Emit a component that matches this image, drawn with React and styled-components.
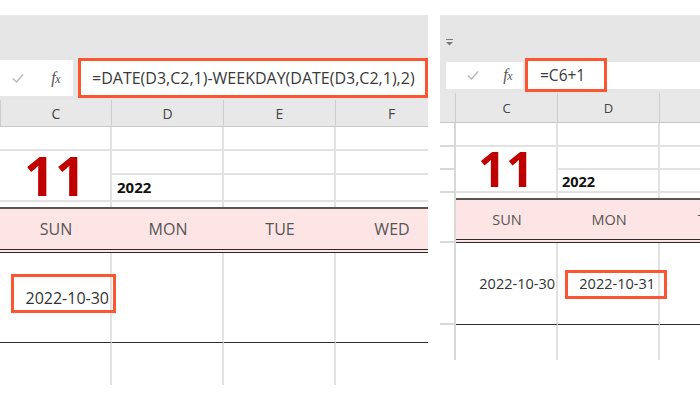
import React from 'react';
import styled, { createGlobalStyle } from 'styled-components';

const Global = createGlobalStyle`
  html, body { margin: 0; padding: 0; background: #fff; }
  body { font-family: "Open Sans", "Noto Sans", sans-serif; }
  * { box-sizing: border-box; }
`;

const RED = '#fb5531';
const GRID = '#e2e2e2';

const Page = styled.div`
  display: flex;
  gap: 12px;
  width: 700px;
  height: 400px;
  overflow: hidden;
  background: #fff;
`;

const Panel = styled.div`
  flex: none;
  width: ${p => p.$w}px;
  padding-top: 15px;
  display: flex;
  flex-direction: column;
  overflow: hidden;
`;

const Toolbar = styled.div`
  height: ${p => p.$h}px;
  background: #e6e6e6;
  display: flex;
  flex-direction: column;
  padding-bottom: ${p => p.$pb}px;
`;

const QatRow = styled.div`
  height: 26px;
  padding: 14px 0 0 6px;
  color: #7a7a7a;
`;

const FormulaRow = styled.div`
  margin-top: auto;
  height: ${p => p.$h}px;
  display: flex;
  align-items: center;
  padding-left: ${p => p.$pl}px;
`;

const FxBox = styled.div`
  flex: none;
  width: ${p => p.$w}px;
  height: ${p => p.$h}px;
  background: #fff;
  display: flex;
  align-items: center;
  justify-content: flex-end;
  gap: ${p => p.$gap}px;
  padding-right: ${p => p.$pr}px;
`;

const Fx = styled.span`
  font-family: "Liberation Serif", "DejaVu Serif", serif;
  font-style: italic;
  font-size: 16px;
  color: #555;
  letter-spacing: -0.5px;
  & > small { font-size: 12px; }
`;

const FormulaStrip = styled.div`
  flex: 1;
  height: ${p => p.$h}px;
  margin-left: ${p => p.$ml}px;
  background: ${p => (p.$fill ? '#fff' : 'transparent')};
  display: flex;
  align-items: center;
`;

const FormulaBox = styled.div`
  flex: ${p => (p.$w ? 'none' : '1')};
  width: ${p => (p.$w ? `${p.$w}px` : 'auto')};
  height: ${p => p.$h}px;
  border: 3px solid ${RED};
  background: #fff;
  display: flex;
  align-items: center;
  padding-left: ${p => p.$pl}px;
  font-size: ${p => p.$fs}px;
  color: #3a3a3a;
  white-space: nowrap;
`;

const Sheet = styled.div`
  display: grid;
  grid-template-columns: ${p => p.$cols};
  grid-template-rows: ${p => p.$rows};
  width: max-content;
`;

const ColHead = styled.div`
  background: #e8e8e8;
  border-right: 1px solid #cdcdcd;
  border-left: ${p => (p.$first ? '1px solid #cdcdcd' : 'none')};
  border-bottom: 1px solid #c8c8c8;
  display: flex;
  align-items: center;
  justify-content: center;
  font-size: ${p => p.$fs}px;
  color: #444;
`;

const Cell = styled.div`
  position: relative;
  grid-row: ${p => (p.$span ? `span ${p.$span}` : 'auto')};
  background: #fff;
  border-right: 2px solid ${GRID};
  border-bottom: ${p =>
    p.$bottom === 'none' ? 'none' : p.$bottom === 'dark' ? '1px solid #2e2e2e' : `2px solid ${GRID}`};
  display: flex;
  align-items: ${p => p.$valign || 'center'};
  justify-content: ${p => p.$align || 'flex-start'};
  padding: 0 ${p => p.$pr || 0}px ${p => p.$pb || 0}px ${p => p.$pl || 0}px;
  white-space: nowrap;
`;

const RowHead = styled.div`
  background: #fff;
  border-right: 2px solid #d8d8d8;
  border-bottom: ${p => (p.$bottom === 'none' ? 'none' : '2px solid #d8d8d8')};
`;

const BigMonth = styled.span`
  font-size: ${p => p.$fs}px;
  line-height: ${p => p.$fs}px;
  font-weight: 700;
  color: #c00000;
  margin-bottom: ${p => p.$mb}px;
`;

const Year = styled.span`
  font-size: ${p => p.$fs}px;
  line-height: 1;
  font-weight: 700;
  color: #111;
`;

const DayBand = styled.div`
  grid-column: ${p => p.$from} / -1;
  display: grid;
  grid-template-columns: ${p => p.$cols};
  background: #fee5e5;
  border-top: 2px solid #555;
  border-bottom: 4px double #2a2a2a;
`;

const DayName = styled.div`
  display: flex;
  align-items: center;
  justify-content: center;
  font-size: ${p => p.$fs}px;
  color: #555;
`;

const DateText = styled.span`
  font-size: ${p => p.$fs}px;
  color: #333;
`;

const Highlight = styled.div`
  position: absolute;
  z-index: 2;
  left: ${p => p.$l}px;
  top: ${p => p.$t}px;
  width: ${p => p.$w}px;
  height: ${p => p.$h}px;
  border: 3px solid ${RED};
  pointer-events: none;
`;

const Check = () => (
  <svg width="12" height="10" viewBox="0 0 12 10">
    <polyline points="1,5.5 4.5,9 11,1.5" fill="none" stroke="#bcbcbc" strokeWidth="1.6" />
  </svg>
);

const QatIcon = () => (
  <svg width="7" height="7" viewBox="0 0 7 7">
    <rect x="0" y="0" width="7" height="1" fill="currentColor" />
    <polygon points="0,3 7,3 3.5,6.5" fill="currentColor" />
  </svg>
);

function LeftPanel() {
  const cols = '112px 112px 112px 112px';
  return (
    <Panel $w={428}>
      <Toolbar $h={85} $pb={2}>
        <FormulaRow $h={40} $pl={0}>
          <FxBox $w={73} $h={36} $gap={27} $pr={13}>
            <Check />
            <Fx>f<small>x</small></Fx>
          </FxBox>
          <FormulaStrip $h={40} $ml={5}>
            <FormulaBox $h={40} $pl={11} $fs={16}>
              =DATE(D3,C2,1)-WEEKDAY(DATE(D3,C2,1),2)
            </FormulaBox>
          </FormulaStrip>
        </FormulaRow>
      </Toolbar>
      <Sheet $cols={cols} $rows="27px 24px 24px 27px 5px 46px 90px 42px">
        <ColHead $first $fs={14}>C</ColHead>
        <ColHead $fs={14}>D</ColHead>
        <ColHead $fs={14}>E</ColHead>
        <ColHead $fs={14}>F</ColHead>

        <Cell /><Cell /><Cell /><Cell />

        <Cell $span={2} $align="center" $valign="flex-end">
          <BigMonth $fs={54} $mb={-2}>11</BigMonth>
        </Cell>
        <Cell /><Cell /><Cell />
        <Cell $valign="flex-end" $pl={5} $pb={5}>
          <Year $fs={15}>2022</Year>
        </Cell>
        <Cell /><Cell />

        <Cell $bottom="none" /><Cell $bottom="none" /><Cell $bottom="none" /><Cell $bottom="none" />

        <DayBand $from={1} $cols={cols}>
          <DayName $fs={16}>SUN</DayName>
          <DayName $fs={16}>MON</DayName>
          <DayName $fs={16}>TUE</DayName>
          <DayName $fs={16}>WED</DayName>
        </DayBand>

        <Cell $bottom="dark" $align="flex-end" $pr={1}>
          <DateText $fs={16}>2022-10-30</DateText>
          <Highlight $l={11} $t={21} $w={105} $h={39} />
        </Cell>
        <Cell $bottom="dark" /><Cell $bottom="dark" /><Cell $bottom="dark" />

        <Cell $bottom="none" /><Cell $bottom="none" /><Cell $bottom="none" /><Cell $bottom="none" />
      </Sheet>
    </Panel>
  );
}

function RightPanel() {
  const cols = '102px 102px 102px';
  return (
    <Panel $w={260}>
      <Toolbar $h={78} $pb={1}>
        <QatRow><QatIcon /></QatRow>
        <FormulaRow $h={34} $pl={6}>
          <FxBox $w={77} $h={27} $gap={24} $pr={11}>
            <Check />
            <Fx>f<small>x</small></Fx>
          </FxBox>
          <FormulaStrip $h={27} $ml={2} $fill>
            <FormulaBox $w={82} $h={34} $pl={12} $fs={15.5}>
              =C6+1
            </FormulaBox>
          </FormulaStrip>
        </FormulaRow>
      </Toolbar>
      <Sheet $cols={`16px ${cols}`} $rows="30px 24px 23px 23px 5px 45px 82px 35px">
        <ColHead $fs={13}></ColHead>
        <ColHead $fs={13}>C</ColHead>
        <ColHead $fs={13}>D</ColHead>
        <ColHead $fs={13}></ColHead>

        <RowHead /><Cell /><Cell /><Cell />

        <RowHead />
        <Cell $span={2} $align="center" $valign="flex-end">
          <BigMonth $fs={49} $mb={-2}>11</BigMonth>
        </Cell>
        <Cell /><Cell />
        <RowHead />
        <Cell $valign="flex-end" $pl={4} $pb={2}>
          <Year $fs={14.5}>2022</Year>
        </Cell>
        <Cell />

        <RowHead $bottom="none" /><Cell $bottom="none" /><Cell $bottom="none" /><Cell $bottom="none" />

        <RowHead />
        <DayBand $from={2} $cols={cols}>
          <DayName $fs={14.5}>SUN</DayName>
          <DayName $fs={14.5}>MON</DayName>
          <DayName $fs={14.5}>TUE</DayName>
        </DayBand>

        <RowHead />
        <Cell $bottom="dark" $align="flex-end" $pr={1}>
          <DateText $fs={14.5}>2022-10-30</DateText>
        </Cell>
        <Cell $bottom="dark" $align="flex-end" $pr={3}>
          <DateText $fs={14.5}>2022-10-31</DateText>
          <Highlight $l={7} $t={27} $w={102} $h={29} />
        </Cell>
        <Cell $bottom="dark" />

        <RowHead $bottom="none" /><Cell $bottom="none" /><Cell $bottom="none" /><Cell $bottom="none" />
      </Sheet>
    </Panel>
  );
}

export default function App() {
  return (
    <>
      <Global />
      <Page>
        <LeftPanel />
        <RightPanel />
      </Page>
    </>
  );
}
